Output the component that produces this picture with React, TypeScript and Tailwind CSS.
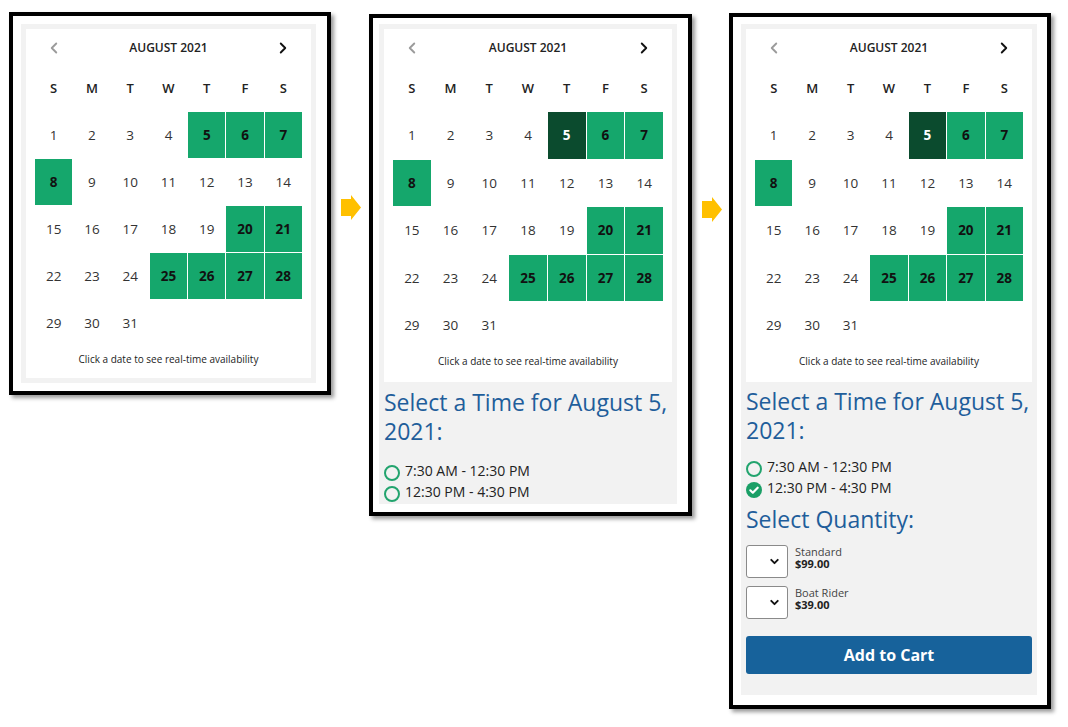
import { ChevronLeft, ChevronRight, ChevronDown } from 'lucide-react';

const AVAILABLE = [5, 6, 7, 8, 20, 21, 25, 26, 27, 28];

interface CalendarProps {
  selected?: number;
  tall?: boolean;
}

function Calendar({ selected, tall }: CalendarProps) {
  const days = Array.from({ length: 31 }, (_, i) => i + 1);

  return (
    <div className="bg-white px-[9px]">
      <div className={`flex items-center justify-between ${tall ? 'h-[37px]' : 'h-[37px]'}`}>
        <div className="flex w-[38px] justify-center text-[#9b9b9b]">
          <ChevronLeft size={18} strokeWidth={2.5} />
        </div>
        <div className="text-[12px] font-semibold text-[#222]">AUGUST 2021</div>
        <div className="flex w-[38px] justify-center text-[#111]">
          <ChevronRight size={18} strokeWidth={2.5} />
        </div>
      </div>

      <div className="grid h-[46px] grid-cols-7 items-center gap-x-[1px]">
        {['S', 'M', 'T', 'W', 'T', 'F', 'S'].map((d, i) => (
          <div key={i} className="text-center text-[13px] font-semibold text-[#222]">
            {d}
          </div>
        ))}
      </div>

      <div className="grid grid-cols-7 gap-[1px]">
        {days.map((day) => {
          const open = AVAILABLE.includes(day);
          const isSelected = day === selected;
          let cls = 'text-[#333]';
          if (open) cls = 'bg-[#15a76c] font-bold text-[#111]';
          if (isSelected) cls = 'bg-[#0b4b2e] font-bold text-white';
          return (
            <div
              key={day}
              className={`flex items-center justify-center text-[13.5px] ${tall ? 'h-[46.5px]' : 'h-[46px]'} ${cls}`}
            >
              {day}
            </div>
          );
        })}
      </div>

      <div
        className={`text-center text-[10px] font-medium leading-[14px] text-[#222] ${
          tall ? 'pb-[14px] pt-[5px]' : 'pb-[12px] pt-[6px]'
        }`}
      >
        Click a date to see real-time availability
      </div>
    </div>
  );
}

function Radio({ checked }: { checked?: boolean }) {
  if (checked) {
    return (
      <svg width="16" height="16" viewBox="0 0 16 16" className="shrink-0">
        <circle cx="8" cy="8" r="8" fill="#1a9f66" />
        <path d="M4.3 8.3l2.5 2.4 4.9-5" fill="none" stroke="white" strokeWidth="2.2" strokeLinecap="round" strokeLinejoin="round" />
      </svg>
    );
  }
  return <div className="h-[16px] w-[16px] shrink-0 rounded-full border-2 border-[#22a46e]" />;
}

function TimeOption({ label, checked }: { label: string; checked?: boolean }) {
  return (
    <div className="flex h-[21px] items-end gap-[5px]">
      <Radio checked={checked} />
      <span className="self-center text-[14px] leading-[21px] text-[#222]">{label}</span>
    </div>
  );
}

function Heading({ children }: { children: React.ReactNode }) {
  return <h2 className="whitespace-nowrap text-[23px] leading-[29px] text-[#1f5e9b]">{children}</h2>;
}

function QuantityRow({ name, price }: { name: string; price: string }) {
  return (
    <div className="flex items-start gap-[7px]">
      <div className="flex h-[33px] w-[42px] items-center justify-end rounded-[3px] border border-[#8a8a8a] bg-white pr-[6px] text-[#111]">
        <ChevronDown size={13} strokeWidth={3.5} />
      </div>
      <div className="flex flex-col gap-[1px] pt-[1px] text-[11px]">
        <div className="h-[11px] leading-[11px] text-[#444]">{name}</div>
        <div className="h-[11px] font-bold leading-[11px] text-[#222]">{price}</div>
      </div>
    </div>
  );
}

function Arrow({ className }: { className: string }) {
  return (
    <svg width="20" height="25" viewBox="0 0 20 25" className={className}>
      <polygon points="0,4 10,4 10,0 20,12.5 10,25 10,21 0,21" fill="#ffc000" />
    </svg>
  );
}

export default function App() {
  return (
    <div className="flex h-[727px] w-[1068px] items-start bg-white font-['Open_Sans',sans-serif]">
      {/* step 1: calendar only */}
      <div className="ml-[9px] mt-[12px] w-[322px] border-4 border-black pb-[8px] pl-[8px] pr-[11px] pt-[8px] shadow-[3px_3px_4px_rgba(0,0,0,0.4)]">
        <div className="w-[295px] bg-[#f2f2f2] p-[5px]">
          <Calendar />
        </div>
      </div>

      <Arrow className="ml-[10px] mt-[195px] shrink-0" />

      {/* step 2: date picked */}
      <div className="ml-[8px] mt-[14px] w-[323px] border-4 border-black pb-[8px] pl-[6px] pr-[11px] pt-[6px] shadow-[3px_3px_4px_rgba(0,0,0,0.4)]">
        <div className="w-[298px] bg-[#f2f2f2] px-[5px] pb-[2px] pt-[5px]">
          <Calendar selected={5} tall />
          <div className="mt-[6px]">
            <Heading>
              Select a Time for August 5,
              <br />
              2021:
            </Heading>
          </div>
          <div className="mt-[14px]">
            <TimeOption label="7:30 AM - 12:30 PM" />
            <TimeOption label="12:30 PM - 4:30 PM" />
          </div>
        </div>
      </div>

      <Arrow className="ml-[10px] mt-[197px] shrink-0" />

      {/* step 3: time picked */}
      <div className="ml-[7px] mt-[13px] w-[322px] border-4 border-black pb-[10px] pl-[8px] pr-[10px] pt-[7px] shadow-[3px_3px_4px_rgba(0,0,0,0.4)]">
        <div className="w-[296px] bg-[#f2f2f2] px-[5px] pb-[21px] pt-[5px]">
          <Calendar selected={5} tall />
          <div className="mt-[5px]">
            <Heading>
              Select a Time for August 5,
              <br />
              2021:
            </Heading>
          </div>
          <div className="mt-[11px]">
            <TimeOption label="7:30 AM - 12:30 PM" />
            <TimeOption label="12:30 PM - 4:30 PM" checked />
          </div>
          <div className="mt-[7px]">
            <Heading>Select Quantity:</Heading>
          </div>
          <div className="mt-[11px] flex flex-col gap-[8px]">
            <QuantityRow name="Standard" price="$99.00" />
            <QuantityRow name="Boat Rider" price="$39.00" />
          </div>
          <button
            type="button"
            className="mt-[17px] h-[38px] w-full rounded-[3px] bg-[#17629b] text-[16px] font-bold text-white"
          >
            Add to Cart
          </button>
        </div>
      </div>
    </div>
  );
}
